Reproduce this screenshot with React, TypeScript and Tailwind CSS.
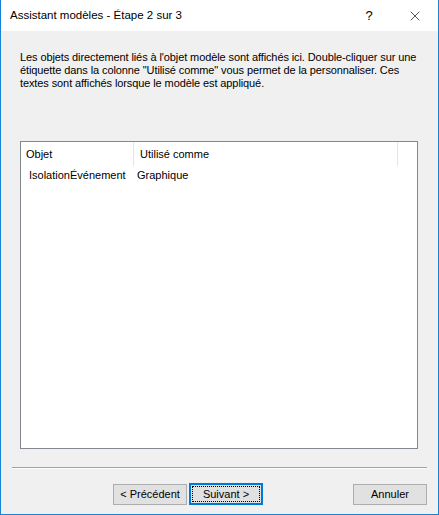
import { X } from "lucide-react";

const FONT = { fontFamily: '"Liberation Sans", Arial, sans-serif' };

export default function App() {
  return (
    <div
      className="w-[439px] h-[515px] flex flex-col bg-[#f0f0f0] border-l border-r border-b border-[#1883d7] text-[11px] text-black overflow-hidden"
      style={FONT}
    >
      {/* title bar */}
      <div className="h-[31px] bg-white flex items-center shrink-0 text-[11.5px]">
        <span className="pl-[9px] flex-1 leading-none">Assistant modèles - Étape 2 sur 3</span>
        <span className="w-[46px] text-center text-[13px] leading-none">?</span>
        <span className="w-[46px] flex justify-center">
          <X className="w-[16px] h-[16px]" strokeWidth={1} />
        </span>
      </div>

      {/* body */}
      <div className="flex-1 flex flex-col px-[11px]">
        <p className="pt-[20px] pl-[8px] leading-[13px] whitespace-nowrap tracking-[-0.1px]">
          Les objets directement liés à l'objet modèle sont affichés ici. Double-cliquer sur une
          <br />
          étiquette dans la colonne "Utilisé comme" vous permet de la personnaliser. Ces
          <br />
          textes sont affichés lorsque le modèle est appliqué.
        </p>

        <div className="mt-[51px] ml-[8px] mr-[9px] h-[308px] bg-white border border-[#828790] flex flex-col">
          <div className="flex h-[24px] items-center">
            <div className="w-[113px] pl-[5px] h-full flex items-center border-r border-[#e5e5e5]">Objet</div>
            <div className="w-[264px] pl-[6px] h-full flex items-center border-r border-[#e5e5e5]">Utilisé comme</div>
          </div>
          <div className="flex h-[19px] items-center">
            <div className="w-[114px] pl-[8px] whitespace-nowrap">IsolationÉvénement</div>
            <div className="pl-[2px]">Graphique</div>
          </div>
        </div>

        <div className="mt-[18px] h-px bg-[#a0a0a0] border-b border-white box-content" />

        <div className="mt-[14px] flex items-center">
          <button className="ml-[101px] w-[74px] h-[21px] bg-[#e1e1e1] border border-[#adadad] leading-none">
            &lt; Précédent
          </button>
          <button className="ml-[2px] w-[74px] h-[22px] bg-[#e1e1e1] border-2 border-[#0078d7] p-px">
            <span className="w-full h-full flex items-center justify-center border border-dotted border-black leading-none">
              Suivant &gt;
            </span>
          </button>
          <button className="ml-auto w-[74px] h-[21px] bg-[#e1e1e1] border border-[#adadad] leading-none">
            Annuler
          </button>
        </div>
      </div>
    </div>
  );
}
